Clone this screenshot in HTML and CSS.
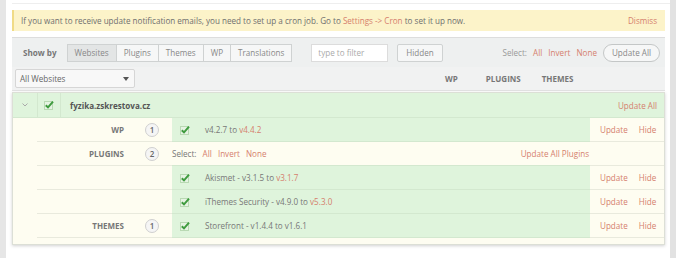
FILE: index.html
```html
<!DOCTYPE html>
<html lang="en">
<head>
  <meta charset="UTF-8">
  <title>Updates</title>
  <link rel="stylesheet" href="styles.css">
</head>
<body>
  <div class="frame">
    <div class="main">
      <div class="top-line"></div>

      <div class="notice">
        <p>If you want to receive update notification emails, you need to set up a cron job. Go to <a href="#">Settings -&gt; Cron</a> to set it up now.</p>
        <a href="#" class="dismiss">Dismiss</a>
      </div>

      <div class="panel">
        <div class="toolbar">
          <span class="show-by">Show by</span>
          <div class="btn-group">
            <span class="btn active">Websites</span>
            <span class="btn">Plugins</span>
            <span class="btn">Themes</span>
            <span class="btn">WP</span>
            <span class="btn">Translations</span>
          </div>
          <input class="filter" type="text" placeholder="type to filter">
          <span class="btn single">Hidden</span>
          <div class="select-links">
            Select: <a href="#">All</a> <a href="#">Invert</a> <a href="#">None</a>
          </div>
          <span class="btn pill">Update All</span>
        </div>

        <div class="filter-row">
          <div class="dropdown">All Websites <span class="caret"></span></div>
          <div class="col-heads">
            <span class="head-wp">WP</span>
            <span class="head-plugins">PLUGINS</span>
            <span class="head-themes">THEMES</span>
          </div>
        </div>

        <div class="site">
          <div class="site-row">
            <div class="cell expander"><svg class="chev" viewBox="0 0 6 4"><path d="M0.5 0.5 L3 3 L5.5 0.5" fill="none" stroke="#aaa" stroke-width="1"/></svg></div>
            <div class="cell check"><svg class="cb" viewBox="0 0 10 10"><rect x="0.5" y="1.5" width="8" height="8" fill="#e6f3e3" stroke="#b9d9b3"/><path d="M1.8 5.2 L4 7.4 L9 1.6" fill="none" stroke="#3e9b3e" stroke-width="2"/></svg></div>
            <div class="cell site-name">fyzika.zskrestova.cz</div>
            <div class="cell site-action"><a href="#">Update All</a></div>
          </div>

          <div class="sub-row">
            <div></div>
            <div class="label">WP</div>
            <div class="badge-cell"><span class="badge">1</span></div>
            <div class="item">
              <svg class="cb" viewBox="0 0 10 10"><rect x="0.5" y="1.5" width="8" height="8" fill="#e6f3e3" stroke="#b9d9b3"/><path d="M1.8 5.2 L4 7.4 L9 1.6" fill="none" stroke="#3e9b3e" stroke-width="2"/></svg>
              <span>v4.2.7 to <a href="#">v4.4.2</a></span>
            </div>
            <div class="actions"><a href="#">Update</a><a href="#">Hide</a></div>
          </div>

          <div class="sub-row">
            <div></div>
            <div class="label">PLUGINS</div>
            <div class="badge-cell"><span class="badge">2</span></div>
            <div class="item plain">
              <span>Select: <a href="#">All</a> <a href="#">Invert</a> <a href="#">None</a></span>
              <a href="#" class="update-plugins">Update All Plugins</a>
            </div>
            <div class="actions plain"></div>
          </div>

          <div class="sub-row">
            <div></div>
            <div class="label"></div>
            <div class="badge-cell"></div>
            <div class="item">
              <svg class="cb" viewBox="0 0 10 10"><rect x="0.5" y="1.5" width="8" height="8" fill="#e6f3e3" stroke="#b9d9b3"/><path d="M1.8 5.2 L4 7.4 L9 1.6" fill="none" stroke="#3e9b3e" stroke-width="2"/></svg>
              <span>Akismet - v3.1.5 to <a href="#">v3.1.7</a></span>
            </div>
            <div class="actions"><a href="#">Update</a><a href="#">Hide</a></div>
          </div>

          <div class="sub-row">
            <div></div>
            <div class="label"></div>
            <div class="badge-cell"></div>
            <div class="item">
              <svg class="cb" viewBox="0 0 10 10"><rect x="0.5" y="1.5" width="8" height="8" fill="#e6f3e3" stroke="#b9d9b3"/><path d="M1.8 5.2 L4 7.4 L9 1.6" fill="none" stroke="#3e9b3e" stroke-width="2"/></svg>
              <span>iThemes Security - v4.9.0 to <a href="#">v5.3.0</a></span>
            </div>
            <div class="actions"><a href="#">Update</a><a href="#">Hide</a></div>
          </div>

          <div class="sub-row">
            <div></div>
            <div class="label">THEMES</div>
            <div class="badge-cell"><span class="badge">1</span></div>
            <div class="item">
              <svg class="cb" viewBox="0 0 10 10"><rect x="0.5" y="1.5" width="8" height="8" fill="#e6f3e3" stroke="#b9d9b3"/><path d="M1.8 5.2 L4 7.4 L9 1.6" fill="none" stroke="#3e9b3e" stroke-width="2"/></svg>
              <span>Storefront - v1.4.4 to v1.6.1</span>
            </div>
            <div class="actions"><a href="#">Update</a><a href="#">Hide</a></div>
          </div>
        </div>
      </div>
    </div>
  </div>
</body>
</html>
```

FILE: styles.css
```css
:root {
  --text: #777;
  --link: #d5806d;
  --green: #dff4dc;
  --cream: #fefdf1;
  --line: #e9eadd;
}

* {
  margin: 0;
  padding: 0;
  box-sizing: border-box;
}

body {
  font-family: "Open Sans", "Liberation Sans", sans-serif;
  font-size: 8.1px;
  color: var(--text);
  background: #fff;
}

a {
  color: var(--link);
  text-decoration: none;
}

.frame {
  height: 258px;
  border-left: 6px solid #e6e6e6;
  border-right: 6px solid #e2e2e2;
  overflow: hidden;
}

.main {
  padding: 0 0 0 6px;
  width: 659px;
}

.top-line {
  height: 4px;
  border-bottom: 1px solid #eeeeee;
  margin-right: -6px;
}

.notice {
  margin-top: 6px;
  height: 21px;
  display: flex;
  align-items: center;
  justify-content: space-between;
  padding: 0 8px 0 7px;
  background: #fcf3c9;
  border-left: 2px solid #f0db86;
  color: #6f6f6f;
}

.panel {
  margin-top: 6px;
  border-top: 1px solid #dddddd;
}

.toolbar {
  height: 29px;
  display: flex;
  align-items: center;
  padding: 0 5px 0 11px;
  background: #eef0f0;
}

.show-by {
  font-weight: bold;
  color: #777;
  margin-right: 10px;
}

.btn-group {
  display: flex;
}

.btn {
  display: inline-flex;
  align-items: center;
  height: 18px;
  padding: 0 7px;
  border: 1px solid #cfd2d2;
  background: #f6f7f7;
  color: #888;
}

.btn-group .btn + .btn {
  border-left: none;
}

.btn.active {
  background: #e3e5e5;
}

.filter {
  margin-left: 19px;
  width: 77px;
  height: 18px;
  border: 1px solid #dcdcdc;
  background: #fff;
  font-family: inherit;
  font-size: 8.1px;
  padding: 0 6px;
  outline: none;
}

.filter::placeholder {
  color: #aaa;
}

.btn.single {
  margin-left: 9px;
  padding: 0 8px;
  border-radius: 2px;
}

.select-links {
  margin-left: auto;
  color: #999;
}

.select-links a {
  margin-left: 4px;
}

.btn.pill {
  margin-left: 6px;
  height: 18px;
  border-radius: 9px;
  border-color: #c4c7c7;
  padding: 0 8px;
}

.filter-row {
  height: 24px;
  display: flex;
  align-items: center;
  padding-left: 3px;
  background: #f1f2f2;
  border-bottom: 1px solid #e2e2e2;
}

.dropdown {
  position: relative;
  width: 120px;
  height: 19px;
  display: flex;
  align-items: center;
  padding-left: 4px;
  border: 1px solid #d6d6d6;
  border-radius: 2px;
  background: #f8f8f8;
  color: #666;
}

.caret {
  position: absolute;
  right: 5px;
  top: 7px;
  border-left: 3px solid transparent;
  border-right: 3px solid transparent;
  border-top: 4px solid #555;
}

.col-heads {
  display: flex;
  font-weight: bold;
  color: #777;
  font-size: 8px;
}

.head-wp {
  margin-left: 310px;
}

.head-plugins {
  margin-left: 28px;
}

.head-themes {
  margin-left: 21px;
}

.site {
  margin-top: 1px;
  border: 1px solid #dcdfd6;
  background: var(--cream);
  padding-bottom: 6px;
  box-shadow: 0 1px 3px rgba(0, 0, 0, 0.18);
}

.site-row {
  display: flex;
  height: 25px;
  background: var(--green);
  border-bottom: 1px solid #d3e8cf;
}

.cell {
  display: flex;
  align-items: center;
}

.expander {
  width: 25px;
  justify-content: center;
  border-right: 1px solid #d3e8cf;
}

.chev {
  width: 6px;
  height: 4px;
}

.check {
  width: 23px;
  justify-content: center;
  border-right: 1px solid #d3e8cf;
}

.cb {
  width: 10px;
  height: 10px;
}

.site-name {
  margin-left: 9px;
  font-weight: bold;
  color: #555;
}

.site-action {
  margin-left: auto;
  padding-right: 7px;
}

.sub-row {
  display: grid;
  grid-template-columns: 24px 98px 37px 1fr 74px;
  height: 24px;
}

.sub-row > div {
  display: flex;
  align-items: center;
}

.sub-row > div + div {
  border-bottom: 1px solid var(--line);
}

.label {
  justify-content: flex-end;
  padding-right: 11px;
  font-weight: bold;
  font-size: 8px;
  color: #777;
}

.badge-cell {
  padding-left: 10px;
}

.badge {
  width: 14px;
  height: 14px;
  border-radius: 50%;
  border: 1px solid #cfcfcf;
  background: #f5f5f5;
  display: flex;
  align-items: center;
  justify-content: center;
  color: #666;
  font-size: 8px;
  font-weight: 600;
}

.item {
  background: var(--green);
  padding-left: 8px;
  gap: 15px;
}

.sub-row > .item {
  border-bottom-color: #d3e8cf;
}

.item.plain {
  background: transparent;
  padding-left: 0;
  justify-content: space-between;
}

.item.plain a {
  margin-left: 4px;
}

.item.plain .update-plugins {
  margin-right: 1px;
}

.actions {
  gap: 11px;
  padding-left: 10px;
}
```
